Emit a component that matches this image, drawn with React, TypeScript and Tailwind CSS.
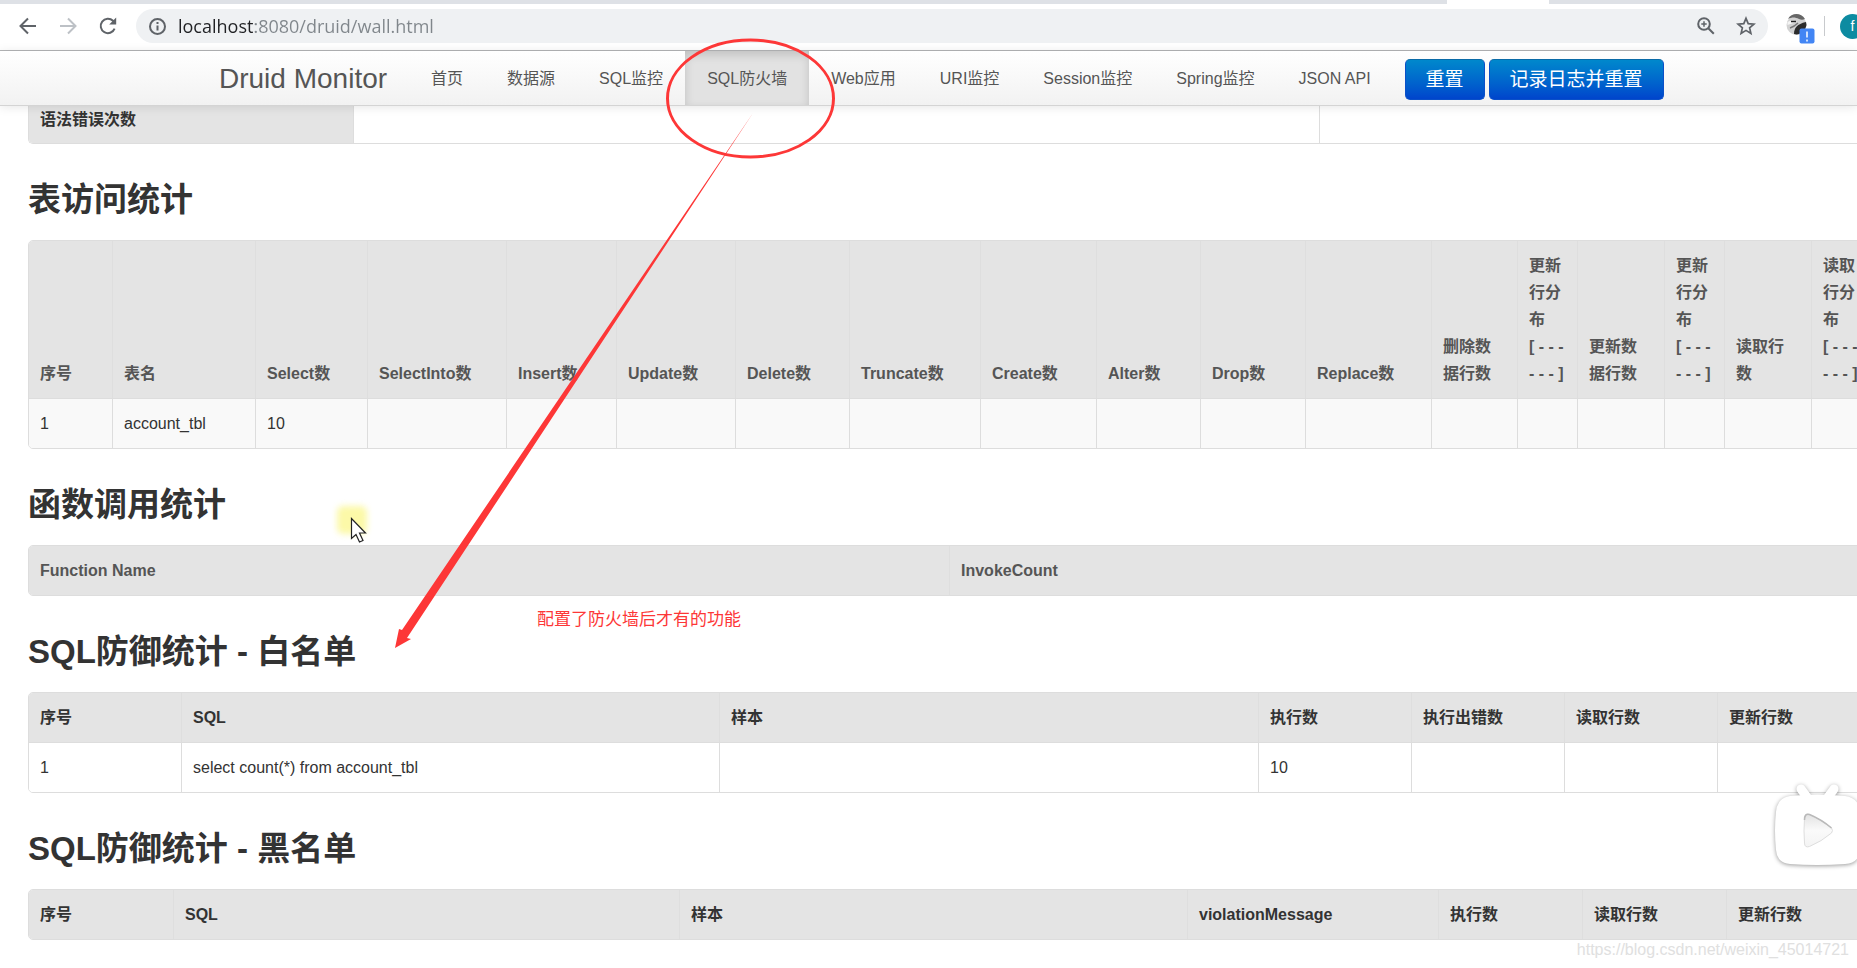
import type { ReactNode } from 'react'

type Column = { label: string; width: string }

const NAV_ITEMS = ['首页', '数据源', 'SQL监控', 'SQL防火墙', 'Web应用', 'URI监控', 'Session监控', 'Spring监控', 'JSON API']

const TABLE_COLUMNS: Column[] = [
  { label: '序号', width: 'w-[83px]' },
  { label: '表名', width: 'w-[143px]' },
  { label: 'Select数', width: 'w-[112px]' },
  { label: 'SelectInto数', width: 'w-[139px]' },
  { label: 'Insert数', width: 'w-[110px]' },
  { label: 'Update数', width: 'w-[119px]' },
  { label: 'Delete数', width: 'w-[114px]' },
  { label: 'Truncate数', width: 'w-[131px]' },
  { label: 'Create数', width: 'w-[116px]' },
  { label: 'Alter数', width: 'w-[104px]' },
  { label: 'Drop数', width: 'w-[105px]' },
  { label: 'Replace数', width: 'w-[126px]' },
  { label: '删除数\n据行数', width: 'w-[86px]' },
  { label: '更新\n行分\n布\n[ - - -\n- - - ]', width: 'w-[60px]' },
  { label: '更新数\n据行数', width: 'w-[87px]' },
  { label: '更新\n行分\n布\n[ - - -\n- - - ]', width: 'w-[60px]' },
  { label: '读取行\n数', width: 'w-[87px]' },
  { label: '读取\n行分\n布\n[ - - -\n- - - ]', width: 'w-[60px]' },
]

const FUNCTION_COLUMNS: Column[] = [
  { label: 'Function Name', width: 'w-1/2' },
  { label: 'InvokeCount', width: 'w-1/2' },
]

const WHITE_COLUMNS: Column[] = [
  { label: '序号', width: 'w-[152px]' },
  { label: 'SQL', width: 'w-[538px]' },
  { label: '样本', width: 'w-[539px]' },
  { label: '执行数', width: 'w-[153px]' },
  { label: '执行出错数', width: 'w-[153px]' },
  { label: '读取行数', width: 'w-[153px]' },
  { label: '更新行数', width: 'w-[153px]' },
]

const BLACK_COLUMNS: Column[] = [
  { label: '序号', width: 'w-[144px]' },
  { label: 'SQL', width: 'w-[506px]' },
  { label: '样本', width: 'w-[508px]' },
  { label: 'violationMessage', width: 'w-[251px]' },
  { label: '执行数', width: 'w-[144px]' },
  { label: '读取行数', width: 'w-[144px]' },
  { label: '更新行数', width: 'w-[144px]' },
]

function Heading({ children }: { children: ReactNode }) {
  return <h3 className="mt-[33px] mb-[17px] text-[33px] leading-[46px] font-bold">{children}</h3>
}

function StatTable({
  columns,
  rows = [],
  headClass = 'text-[#333]',
  rowClass = 'bg-white',
}: {
  columns: Column[]
  rows?: string[][]
  headClass?: string
  rowClass?: string
}) {
  return (
    <table className="w-full table-fixed border-separate border-spacing-0 overflow-hidden rounded-[5px] border border-[#ddd] text-left">
      <thead className={headClass}>
        <tr>
          {columns.map((col, i) => (
            <th
              key={i}
              className={`${col.width} border-l border-[#dedede] bg-[#e4e4e4] p-[11px] align-bottom font-bold whitespace-pre first:border-l-0`}
            >
              {col.label}
            </th>
          ))}
        </tr>
      </thead>
      <tbody>
        {rows.map((row) => (
          <tr key={row[0]} className={rowClass}>
            {columns.map((_, i) => (
              <td key={i} className="h-[50px] border-t border-l border-[#ddd] px-[11px] first:border-l-0">
                {row[i]}
              </td>
            ))}
          </tr>
        ))}
      </tbody>
    </table>
  )
}

function BrowserBar() {
  return (
    <div className="h-[51px] border-b border-[#b4b5b7] bg-white">
      <div className="flex h-1 justify-end bg-[#dee1e6]">
        <div className="mr-[308px] w-[102px] bg-white" />
      </div>
      <div className="mt-[5px] flex h-[34px] items-center">
        <button aria-label="Back" className="ml-[18px]">
          <svg width="20" height="20" viewBox="0 0 20 20" fill="none" stroke="#5f6368" strokeWidth="2">
            <path d="M18 10H3M10 2.5 2.5 10l7.5 7.5" />
          </svg>
        </button>
        <button aria-label="Forward" className="ml-5">
          <svg width="20" height="20" viewBox="0 0 20 20" fill="none" stroke="#bdc1c6" strokeWidth="2">
            <path d="M2 10h15M10 2.5 17.5 10 10 17.5" />
          </svg>
        </button>
        <button aria-label="Reload" className="ml-5">
          <svg width="20" height="20" viewBox="0 0 20 20" fill="none" stroke="#5f6368" strokeWidth="2">
            <path d="M16.6 12.6A7.2 7.2 0 1 1 15 4.8L17 7" />
            <path d="M18.2 1.5v7h-7z" fill="#5f6368" stroke="none" />
          </svg>
        </button>
        <div className="ml-[18px] flex h-[34px] flex-1 items-center rounded-full bg-[#eff1f3] pr-3 pl-[13px]">
          <svg width="17" height="17" viewBox="0 0 17 17" fill="none" stroke="#5f6368" strokeWidth="2">
            <circle cx="8.5" cy="8.5" r="7.5" />
            <path d="M8.5 7.5v5M8.5 4v2" />
          </svg>
          {/* Host is dark, the rest of the address is grey */}
          <input
            aria-label="Address"
            type="text"
            defaultValue="localhost:8080/druid/wall.html"
            className="ml-3 flex-1 bg-[linear-gradient(to_right,#202124_77px,#80868b_77px)] bg-clip-text font-['Open_Sans',sans-serif] text-lg leading-6 text-transparent outline-none"
          />
          <button aria-label="Zoom">
            <svg width="18" height="18" viewBox="0 0 18 18" fill="none" stroke="#5f6368" strokeWidth="2">
              <circle cx="7" cy="7" r="5.8" />
              <path d="m11.3 11.3 5.5 5.5" />
              <path d="M7 4.3v5.4M4.3 7h5.4" strokeWidth="1.5" />
            </svg>
          </button>
          <button aria-label="Bookmark" className="ml-[21px]">
            <svg width="20" height="20" viewBox="0 0 20 20" fill="none" stroke="#5f6368" strokeWidth="1.7">
              <path d="m10 2.3 2.2 5.3 5.7.5-4.3 3.7 1.3 5.6-4.9-3-4.9 3 1.3-5.6L2.1 8.1l5.7-.5z" />
            </svg>
          </button>
        </div>
        <button aria-label="Extension" className="ml-[18px]">
          <svg width="30" height="36" viewBox="0 0 30 36">
            <circle cx="10.5" cy="17" r="10" fill="#d2d2d2" />
            <path d="M2 11C5 5 15 4 19 11c-2 1-4 1-6 0-4-2-7-2-11 0z" fill="#666" />
            <path d="M1.5 14c3-2 6-2 9 0-3 1-6 2-9 3z" fill="#f4f4f4" />
            <path d="M5 13.5h5" stroke="#222" strokeWidth="1.5" />
            <path d="M8 26c0-6 3-10 12-12l.5 3c-1 5-5 9-10 9.5z" fill="#2b2b2b" />
            <path d="M4 20c3-1 5-2 8-5" fill="none" stroke="#777" strokeWidth="1.5" />
            <rect x="13.500" y="20.500" width="15" height="15" rx="2" fill="#4285f4" />
            <path d="M21 23.500v6m0 2v2" stroke="#fff" strokeWidth="1.5" />
          </svg>
        </button>
        <div className="ml-2 h-5 w-px bg-[#c8cacd]" />
        <div className="-mr-2 ml-[15px] flex h-[25px] w-[25px] items-center justify-center rounded-full bg-[#0d8ba1] text-sm text-white">
          f
        </div>
      </div>
    </div>
  )
}

function NavBar() {
  return (
    <nav className="flex h-[55px] items-center border-b border-[#d4d4d4] bg-linear-to-b from-white to-[#f2f2f2] pl-[219px] whitespace-nowrap text-[#555] shadow-[0_1px_10px_rgba(0,0,0,0.1)]">
      <a href="#home" className="mr-[22px] text-[28px]">
        Druid Monitor
      </a>
      {NAV_ITEMS.map((item) => (
        <a
          key={item}
          href={`#${item}`}
          className={`flex h-[54px] items-center px-[22px] ${
            item === 'SQL防火墙' ? 'bg-[#e2e2e2] shadow-[inset_0_4px_10px_rgba(0,0,0,0.15)]' : ''
          }`}
        >
          {item}
        </a>
      ))}
      <div className="ml-3 flex gap-1 pt-0.5 text-[19px] text-white">
        <button className="h-[41px] rounded-[5px] border border-[#0a50c8] border-t-[#0a6ba8] bg-linear-to-b from-[#0088cc] to-[#0044cc] px-5">
          重置
        </button>
        <button className="h-[41px] rounded-[5px] border border-[#0a50c8] border-t-[#0a6ba8] bg-linear-to-b from-[#0088cc] to-[#0044cc] px-5">
          记录日志并重置
        </button>
      </div>
    </nav>
  )
}

function PlayerBadge() {
  return (
    <svg
      className="absolute right-0 bottom-[98px] drop-shadow-[0_1px_2px_rgba(0,0,0,0.4)]"
      width="90"
      height="90"
      viewBox="0 0 90 90"
    >
      <defs>
        <linearGradient id="play" x1="0" y1="0" x2="0" y2="1">
          <stop offset="0" stopColor="#e2e2e2" />
          <stop offset="0.5" stopColor="#fafafa" />
          <stop offset="1" stopColor="#f4f4f4" />
        </linearGradient>
      </defs>
      <path d="m34 9 8 11M67 9l-8 11" stroke="#fff" strokeWidth="9" strokeLinecap="round" />
      <path
        d="M23 16Q50 13 78 16Q92 18 93 32Q95 50 93 70Q92 83 78 84Q50 86 23 84Q10 83 9 70Q7 50 9 32Q10 18 23 16z"
        fill="#fff"
      />
      <path
        d="M37.5 38q0-5 5-3.5 12 5 22 13.5 2 2.5 0 5-10 8.5-22 13.5-5 1.5-5-3.5-1-12 0-25z"
        fill="url(#play)"
        stroke="#dedede"
      />
      <path d="M37.5 40q0-7 5-5.5 12 5 22 13.5" fill="none" stroke="#b9b9b9" strokeWidth="1.5" />
    </svg>
  )
}

function Annotations() {
  return (
    <div className="pointer-events-none absolute inset-0 z-20">
      <div className="absolute top-[506px] left-[337px] h-7 w-[30px] rounded-md bg-[#fcf9a8] blur-[3px]" />
      <svg className="absolute top-0 left-0" width="900" height="700" viewBox="0 0 900 700">
        <ellipse cx="750.5" cy="98.5" rx="83" ry="58.5" fill="none" stroke="#fd3737" strokeWidth="3" />
        <path d="M753 113 402 630l-3-1-4 19 16-9-4-1z" fill="#fd3737" />
        <path
          d="M351.5 518.5v20l4.5-4 3.5 7.5 3.5-1.5-3.5-7.5h6z"
          fill="#fff"
          stroke="#222"
          strokeWidth="1.2"
        />
      </svg>
      <p className="absolute top-[606px] left-[537px] text-[17px] text-[#fd3737]">配置了防火墙后才有的功能</p>
      <p className="absolute right-2 bottom-1.5 text-base text-[#e0e0e0]">https://blog.csdn.net/weixin_45014721</p>
      <PlayerBadge />
    </div>
  )
}

export default function App() {
  return (
    <div className="relative min-h-screen overflow-hidden bg-white font-['Liberation_Sans','Noto_Sans_CJK_SC',sans-serif] text-base leading-[27px] text-[#333]">
      <header className="relative z-10">
        <BrowserBar />
        <NavBar />
      </header>

      <main className="-mt-[11px] -mr-[13px] ml-7">
        <table className="w-full table-fixed border-separate border-spacing-0 overflow-hidden rounded-b-[5px] border-b border-l border-[#ddd] text-left">
          <tbody>
            <tr>
              <th className="h-12 w-[324px] bg-[#e4e4e4] px-[11px] font-bold">语法错误次数</th>
              <td className="w-[966px] border-l border-[#ddd]" />
              <td className="border-l border-[#ddd]" />
            </tr>
          </tbody>
        </table>

        <Heading>表访问统计</Heading>
        <StatTable
          columns={TABLE_COLUMNS}
          rows={[['1', 'account_tbl', '10']]}
          headClass="text-[#555]"
          rowClass="bg-[#f9f9f9]"
        />

        <Heading>函数调用统计</Heading>
        <StatTable columns={FUNCTION_COLUMNS} headClass="text-[#555]" />

        <Heading>SQL防御统计 - 白名单</Heading>
        <StatTable columns={WHITE_COLUMNS} rows={[['1', 'select count(*) from account_tbl', '', '10']]} />

        <Heading>SQL防御统计 - 黑名单</Heading>
        <StatTable columns={BLACK_COLUMNS} />
      </main>

      <Annotations />
    </div>
  )
}
